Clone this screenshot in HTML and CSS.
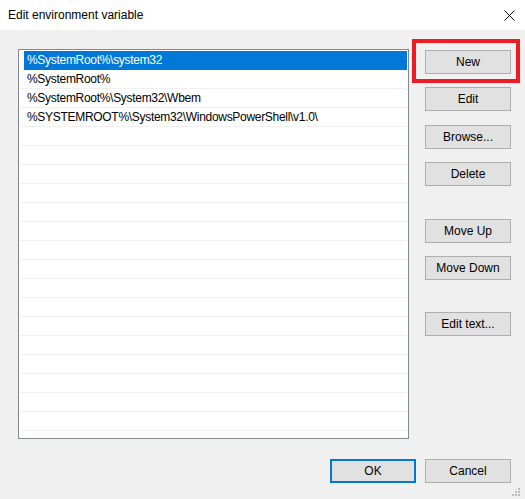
FILE: index.html
```html
<!DOCTYPE html>
<html lang="en">
<head>
  <meta charset="UTF-8">
  <title>Edit environment variable</title>
  <link rel="stylesheet" href="styles.css">
</head>
<body>
  <div id="dialog">
    <div class="titlebar">
      <span class="title">Edit environment variable</span>
      <svg class="close" width="11" height="11" viewBox="0 0 11 11">
        <path d="M0.5 0.5 L10.5 10.5 M10.5 0.5 L0.5 10.5" stroke="#000" stroke-width="1" fill="none"/>
      </svg>
    </div>
    <div class="main">
      <div class="list">
        <div class="row selected"><span>%SystemRoot%\system32</span></div>
        <div class="row"><span>%SystemRoot%</span></div>
        <div class="row"><span>%SystemRoot%\System32\Wbem</span></div>
        <div class="row"><span>%SYSTEMROOT%\System32\WindowsPowerShell\v1.0\</span></div>
        <div class="row"></div>
        <div class="row"></div>
        <div class="row"></div>
        <div class="row"></div>
        <div class="row"></div>
        <div class="row"></div>
        <div class="row"></div>
        <div class="row"></div>
        <div class="row"></div>
        <div class="row"></div>
        <div class="row"></div>
        <div class="row"></div>
        <div class="row"></div>
        <div class="row"></div>
        <div class="row"></div>
        <div class="row"></div>
      </div>
      <div class="side">
        <button class="btn">New</button>
        <button class="btn">Edit</button>
        <button class="btn gap14">Browse...</button>
        <button class="btn">Delete</button>
        <button class="btn group">Move Up</button>
        <button class="btn">Move Down</button>
        <button class="btn group2">Edit text...</button>
      </div>
    </div>
    <div class="footer">
      <button class="btn default">OK</button>
      <button class="btn">Cancel</button>
    </div>
    <div class="highlight"></div>
    <svg class="grip" width="10" height="9" viewBox="0 0 10 9">
      <rect x="6" y="0" width="2" height="2" fill="#bcbcbc"/>
      <rect x="3" y="3" width="2" height="2" fill="#bcbcbc"/>
      <rect x="6" y="3" width="2" height="2" fill="#bcbcbc"/>
      <rect x="0" y="6" width="2" height="2" fill="#bcbcbc"/>
      <rect x="3" y="6" width="2" height="2" fill="#bcbcbc"/>
      <rect x="6" y="6" width="2" height="2" fill="#bcbcbc"/>
    </svg>
  </div>
</body>
</html>
```
FILE: styles.css
```css
html,
body {
  margin: 0;
  padding: 0;
  height: 100%;
}
body {
  background-color: #f0f0f0;
  font-family: "Liberation Sans", Arial, sans-serif;
  font-size: 12px;
  color: #000;
}
#dialog {
  position: relative;
  width: 525px;
  height: 499px;
  overflow: hidden;
}
.titlebar {
  height: 30px;
  background-color: #fff;
  display: flex;
  align-items: center;
  justify-content: space-between;
  padding: 0 10px 0 8px;
}
.title {
  line-height: 30px;
}
.close {
  display: block;
}
.main {
  display: flex;
  padding: 19px 0 0 18px;
}
.list {
  width: 391px;
  height: 390px;
  box-sizing: border-box;
  border: 1px solid #828790;
  background-color: #fff;
  padding: 1px 1px 0 1px;
}
.row {
  height: 19px;
  box-sizing: border-box;
  border-bottom: 1px solid #f0f0f0;
  line-height: 19px;
  padding-left: 7px;
  white-space: nowrap;
  letter-spacing: -0.3px;
}
.row.selected {
  margin-left: 4px;
  padding-left: 3px;
  background-color: #0078d7;
  border-bottom-color: #0078d7;
  color: #fff;
}
.side {
  display: flex;
  flex-direction: column;
  padding: 1px 0 0 16px;
}
.btn {
  width: 86px;
  height: 24px;
  box-sizing: border-box;
  border: 1px solid #adadad;
  background-color: #e1e1e1;
  font-family: inherit;
  font-size: 12px;
  color: #000;
  padding: 0;
  margin: 0 0 13px 0;
}
.btn.gap14 {
  margin-top: 1px;
}
.btn.group {
  margin-top: 20px;
}
.btn.group2 {
  margin-top: 19px;
}
.footer {
  display: flex;
  justify-content: flex-end;
  gap: 9px;
  padding: 20px 14px 0 0;
}
.footer .btn {
  margin: 0;
}
.btn.default {
  border: 2px solid #0078d7;
}
.highlight {
  position: absolute;
  left: 412px;
  top: 39px;
  width: 108px;
  height: 44px;
  box-sizing: border-box;
  border: 4px solid #ed1c24;
}
.grip {
  position: absolute;
  right: 3px;
  bottom: 2px;
}
```
